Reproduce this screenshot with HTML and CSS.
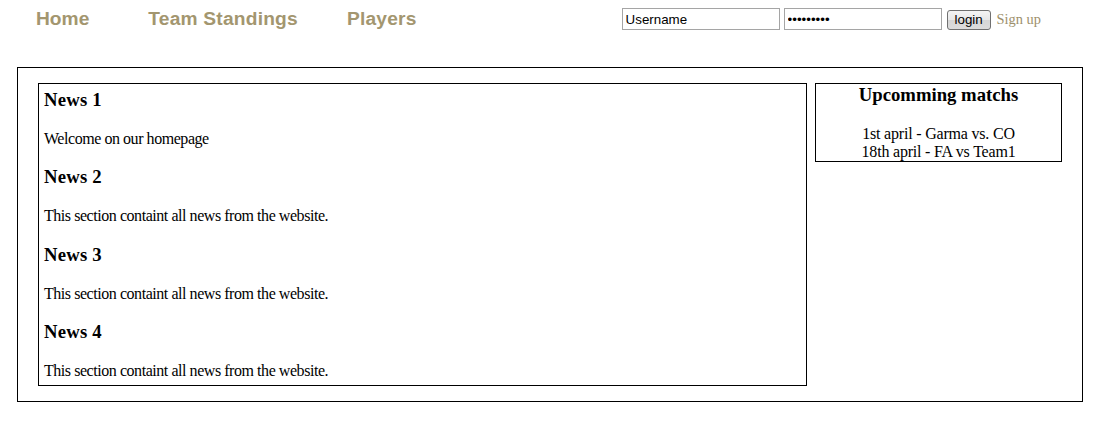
FILE: index.html
```html
<!DOCTYPE html>
<html>
<head>
<meta charset="utf-8">
<title>Home</title>
<link rel="stylesheet" href="styles.css">
</head>
<body>
<div class="header">
  <ul class="nav">
    <li class="nav-item nav-home"><a href="#">Home</a></li>
    <li class="nav-item nav-standings"><a href="#">Team Standings</a></li>
    <li class="nav-item"><a href="#">Players</a></li>
  </ul>
  <form class="login">
    <input class="field" type="text" value="Username">
    <input class="field" type="password" value="123456789">
    <button class="btn" type="button">login</button>
    <a class="signup" href="#">Sign up</a>
  </form>
</div>
<div class="wrapper">
  <div class="content">
    <h3>News 1</h3>
    <p>Welcome on our homepage</p>
    <h3>News 2</h3>
    <p>This section containt all news from the website.</p>
    <h3>News 3</h3>
    <p>This section containt all news from the website.</p>
    <h3>News 4</h3>
    <p>This section containt all news from the website.</p>
  </div>
  <div class="sidebar">
    <h3>Upcomming matchs</h3>
    <p>1st april - Garma vs. CO<br>18th april - FA vs Team1</p>
  </div>
</div>
</body>
</html>
```

FILE: styles.css
```css
* { box-sizing: border-box; }

body {
  margin: 8px;
  font-family: "Liberation Serif", "Times New Roman", serif;
  font-size: 16px;
  color: #000;
  background: #fff;
}

.header {
  display: flex;
  justify-content: space-between;
  align-items: center;
  height: 22px;
  padding-left: 28px;
  padding-right: 64px;
}

.nav {
  display: flex;
  list-style: none;
  margin: 0;
  padding: 0;
}

.nav-item {
  margin-right: 49px;
}

.nav-home {
  margin-right: 59px;
}

.nav-standings {
  margin-right: 49px;
}

.nav-item a {
  font-family: "Liberation Sans", Arial, sans-serif;
  font-weight: bold;
  font-size: 19.2px;
  letter-spacing: 0.2px;
  color: #a3966f;
  text-decoration: none;
  line-height: 22px;
  display: block;
}

.nav-home a {
  letter-spacing: 0;
}

.login {
  display: flex;
  align-items: center;
  margin: 0;
}

.field {
  width: 158px;
  height: 22px;
  border: 1px solid #a5a5a5;
  padding: 1px 3px;
  margin: 0 4px 0 0;
  font-family: "Liberation Sans", Arial, sans-serif;
  font-size: 13.33px;
  color: #000;
  background: #fff;
  outline: none;
}

.field + .field {
  margin-right: 5px;
}

.btn {
  width: 44px;
  height: 20px;
  padding: 0;
  margin: 1px 6px 0 0;
  border: 1px solid #707070;
  border-radius: 3px;
  background: linear-gradient(#f4f4f4, #e8e8e8 50%, #d6d6d6 51%, #dcdcdc);
  font-family: "Liberation Sans", Arial, sans-serif;
  font-size: 13.33px;
  color: #000;
}

.signup {
  font-size: 14.4px;
  color: #9d906c;
  text-decoration: none;
  margin-top: 1px;
}

.wrapper {
  display: flex;
  align-items: flex-start;
  gap: 8px;
  width: 1066px;
  margin: 37px 0 0 9px;
  padding: 15px 20px;
  border: 1px solid #000;
}

.content {
  width: 769px;
  border: 1px solid #000;
  padding: 5px 4px 5px 5px;
}

.content h3 {
  font-size: 1.17em;
  margin: 18.72px 0;
  letter-spacing: 0.2px;
}

.content p {
  margin: 16px 0;
  letter-spacing: -0.45px;
}

.content h3:first-child {
  margin-top: 0;
}

.content p:last-child {
  margin-bottom: 0;
}

.sidebar {
  width: 247px;
  border: 1px solid #000;
  text-align: center;
}

.sidebar h3 {
  font-size: 1.17em;
  margin: 0 0 18.72px;
}

.sidebar p {
  margin: 0;
  letter-spacing: -0.2px;
}
```
